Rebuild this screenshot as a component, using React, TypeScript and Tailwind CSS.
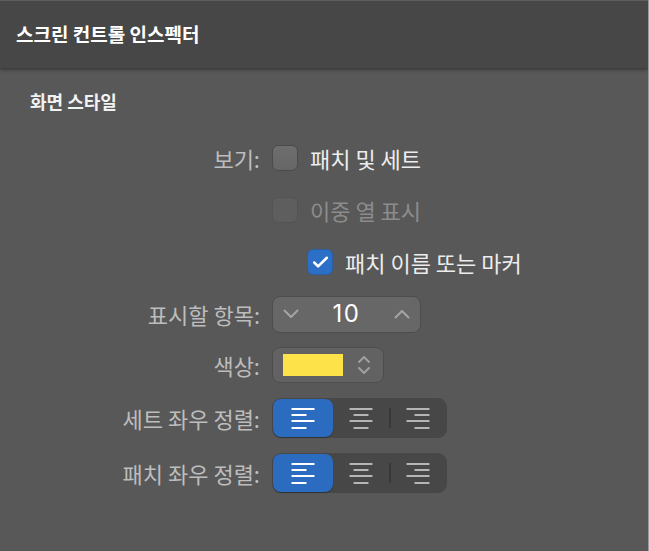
import { Check } from 'lucide-react';

const ko = { fontFamily: '"Noto Sans CJK KR", "Noto Sans", sans-serif' };

function CheckBox({ state }: { state: 'off' | 'disabled' | 'on' }) {
  if (state === 'on') {
    return (
      <div className="flex h-[26px] w-[26px] items-center justify-center rounded-[6px] border border-[#2a5ea6] bg-[#2c6fc6]">
        <Check className="h-[19px] w-[19px] text-white" strokeWidth={3.2} />
      </div>
    );
  }
  if (state === 'disabled') {
    return <div className="h-[26px] w-[26px] rounded-[6px] border border-[#535353] bg-[#5e5e5e]" />;
  }
  return <div className="h-[26px] w-[26px] rounded-[6px] border border-[#4b4b4b] bg-gradient-to-b from-[#6e6e6e] to-[#666666]" />;
}

function AlignIcon({ kind, color }: { kind: 'left' | 'center' | 'right'; color: string }) {
  const rows = [
    { y: 1, w: 23 },
    { y: 7, w: 15 },
    { y: 13, w: 23 },
    { y: 20, w: 15 },
  ];
  return (
    <svg width="24" height="22" viewBox="0 0 24 22">
      {rows.map((r, i) => {
        const x = kind === 'left' ? 0.5 : kind === 'center' ? 12 - r.w / 2 : 23.5 - r.w;
        return <rect key={i} x={x} y={r.y} width={r.w} height="2" rx="0.5" fill={color} />;
      })}
    </svg>
  );
}

function Segmented() {
  return (
    <div className="flex h-[40px] w-[175px] items-center rounded-[9px] bg-[#474747] p-[1px]">
      <div className="flex h-[38px] w-[60px] items-center justify-center rounded-[8px] bg-[#2c6cc0] shadow-[0_1px_1px_rgba(0,0,0,0.3)]">
        <AlignIcon kind="left" color="#ffffff" />
      </div>
      <div className="flex h-full flex-1 items-center justify-center">
        <AlignIcon kind="center" color="#b5b5b5" />
      </div>
      <div className="h-[20px] w-[2px] bg-[#383838]" />
      <div className="flex h-full flex-1 items-center justify-center">
        <AlignIcon kind="right" color="#b5b5b5" />
      </div>
    </div>
  );
}

function Row({ label, children, className = '' }: { label?: string; children: React.ReactNode; className?: string }) {
  return (
    <div className={`flex items-center ${className}`}>
      <div className="w-[272px] shrink-0 pr-[12px] text-right text-[22px] text-[#bdbdbd]" style={ko}>
        {label}
      </div>
      {children}
    </div>
  );
}

export default function App() {
  return (
    <div className="h-[551px] w-[649px] overflow-hidden border-r border-[#9a9a9a] bg-[#585858]" style={ko}>
      {/* Header */}
      <div className="relative z-10 flex h-[68px] items-center border-t border-[#5c5c5c] bg-[#474747] pl-[16px] shadow-[0_2px_3px_rgba(0,0,0,0.35)]">
        <h1 className="text-[19px] font-bold text-white">스크린 컨트롤 인스펙터</h1>
      </div>

      <div className="px-[30px] pt-[20px]">
        <h2 className="text-[18px] font-bold text-[#f2f2f2]">화면 스타일</h2>
      </div>

      <div className="mt-[28px] flex flex-col">
        <Row label="보기:" className="h-[30px]">
          <div className="flex items-center gap-[12px]">
            <CheckBox state="off" />
            <span className="text-[22px] text-[#ededed]">패치 및 세트</span>
          </div>
        </Row>

        <Row className="mt-[22px] h-[30px]">
          <div className="flex items-center gap-[12px]">
            <CheckBox state="disabled" />
            <span className="text-[22px] text-[#8c8c8c]">이중 열 표시</span>
          </div>
        </Row>

        <Row className="mt-[22px] h-[30px]">
          <div className="ml-[35px] flex items-center gap-[12px]">
            <CheckBox state="on" />
            <span className="text-[22px] text-[#ededed]">패치 이름 또는 마커</span>
          </div>
        </Row>

        <Row label="표시할 항목:" className="mt-[18px] h-[38px]">
          <div className="flex h-[37px] w-[149px] items-center justify-between rounded-[8px] border border-[#4d4d4d] bg-[#676767] px-[10px]">
            <svg width="16" height="10" viewBox="0 0 16 10">
              <path d="M1.5 1.5 L8 8 L14.5 1.5" stroke="#a5a5a5" strokeWidth="2" fill="none" strokeLinecap="round" strokeLinejoin="round" />
            </svg>
            <span className="text-[24px] tracking-[1.5px] text-white" style={{ fontFamily: 'Inter, "Liberation Sans", sans-serif' }}>
              10
            </span>
            <svg width="16" height="10" viewBox="0 0 16 10">
              <path d="M1.5 8.5 L8 2 L14.5 8.5" stroke="#a5a5a5" strokeWidth="2" fill="none" strokeLinecap="round" strokeLinejoin="round" />
            </svg>
          </div>
        </Row>

        <Row label="색상:" className="mt-[14px] h-[36px]">
          <div className="flex h-[36px] w-[112px] items-center rounded-[8px] border border-[#4d4d4d] bg-[#626262] pl-[10px]">
            <div className="h-[22px] w-[60px] bg-[#fde24a]" />
            <svg className="ml-[14px]" width="14" height="22" viewBox="0 0 14 22">
              <path d="M2 8 L7 3 L12 8" stroke="#a0a0a0" strokeWidth="2" fill="none" strokeLinecap="round" strokeLinejoin="round" />
              <path d="M2 14 L7 19 L12 14" stroke="#a0a0a0" strokeWidth="2" fill="none" strokeLinecap="round" strokeLinejoin="round" />
            </svg>
          </div>
        </Row>

        <Row label="세트 좌우 정렬:" className="mt-[15px] h-[40px]">
          <Segmented />
        </Row>

        <Row label="패치 좌우 정렬:" className="mt-[15px] h-[40px]">
          <Segmented />
        </Row>
      </div>
    </div>
  );
}
